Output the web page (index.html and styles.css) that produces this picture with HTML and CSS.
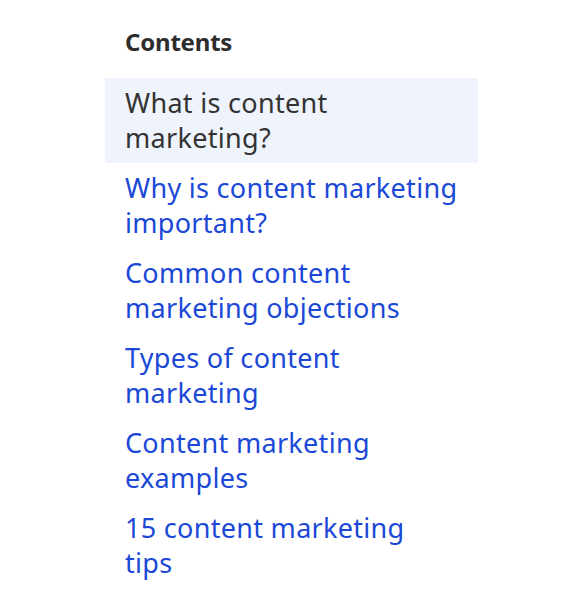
FILE: index.html
```html
<!DOCTYPE html>
<html>
<head>
<meta charset="utf-8">
<link rel="stylesheet" href="styles.css">
</head>
<body>
<nav class="toc">
  <h2 class="toc-title">Contents</h2>
  <ul class="toc-list">
    <li class="toc-item active"><a href="#">What is content marketing?</a></li>
    <li class="toc-item"><a href="#">Why is content marketing important?</a></li>
    <li class="toc-item"><a href="#">Common content marketing objections</a></li>
    <li class="toc-item"><a href="#">Types of content marketing</a></li>
    <li class="toc-item"><a href="#">Content marketing examples</a></li>
    <li class="toc-item"><a href="#">15 content marketing tips</a></li>
  </ul>
</nav>
</body>
</html>
```

FILE: styles.css
```css
html, body {
  margin: 0;
  padding: 0;
  background: #fff;
}
body {
  font-family: "Noto Sans", "Open Sans", sans-serif;
}
.toc {
  width: 373px;
  margin-left: 105px;
  padding-top: 26px;
}
.toc-title {
  margin: 0 0 20px 20px;
  font-size: 24px;
  line-height: 32px;
  font-weight: 700;
  color: #2d2d2d;
  letter-spacing: -0.2px;
}
.toc-list {
  list-style: none;
  margin: 0;
  padding: 0;
}
.toc-item {
  padding: 7px 20px 8px 20px;
  font-size: 27px;
  line-height: 35px;
  letter-spacing: 0.3px;
}
.toc-item a {
  color: #1b48d6;
  text-decoration: none;
}
.toc-item.active {
  background: #eff3fc;
}
.toc-item.active a {
  color: #333333;
}
```
